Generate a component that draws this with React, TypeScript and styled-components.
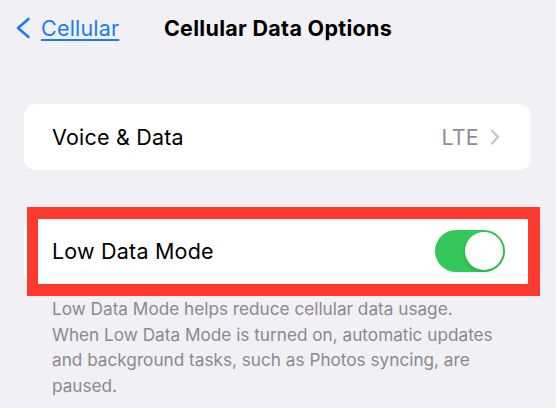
import React from "react";
import styled, { createGlobalStyle } from "styled-components";

const Global = createGlobalStyle`
  html, body { margin: 0; padding: 0; }
  body {
    background: #f1f0f5;
    font-family: Inter, "Noto Sans", "Liberation Sans", sans-serif;
    -webkit-font-smoothing: antialiased;
  }
`;

const Page = styled.div`
  width: 556px;
  height: 408px;
  overflow: hidden;
  background: #f1f0f5;
  display: flex;
  flex-direction: column;
  padding: 0 25px 0 24px;
  box-sizing: border-box;
`;

const NavBar = styled.div`
  height: 56px;
  margin: 0 -25px 0 -24px;
  display: grid;
  grid-template-columns: 1fr auto 1fr;
  align-items: center;
`;

const BackLink = styled.a`
  display: flex;
  align-items: center;
  gap: 9px;
  padding-left: 14px;
  color: #1b7cf4;
  font-size: 21.5px;
  letter-spacing: 0.2px;
  cursor: pointer;
`;

const BackText = styled.span`
  text-decoration: underline;
  text-underline-offset: 3px;
  text-decoration-thickness: 1.5px;
`;

const Title = styled.h1`
  margin: 0;
  font-size: 21.5px;
  font-weight: 700;
  letter-spacing: 0.3px;
  color: #000;
`;

const Card = styled.div`
  height: 66px;
  background: #fff;
  border-radius: 12px;
  display: flex;
  align-items: center;
  justify-content: space-between;
  padding: 0 26px 0 28px;
  box-sizing: border-box;
`;

const Section = styled.div<{ $top: number }>`
  margin-top: ${(p) => p.$top}px;
  position: relative;
`;

const Label = styled.span`
  font-size: 21.5px;
  letter-spacing: 0.2px;
  color: #000;
`;

const Detail = styled.span`
  display: flex;
  align-items: center;
  gap: 11px;
  font-size: 21.5px;
  letter-spacing: 0.2px;
  color: #8e8e93;
  padding-right: 5px;
`;

const RedFrame = styled.div`
  position: absolute;
  left: 3px;
  right: -9px;
  top: -11px;
  bottom: -12px;
  border: 12px solid #fe3a2f;
  border-left-width: 11px;
  pointer-events: none;
`;

const Toggle = styled.div<{ $on: boolean }>`
  width: 70px;
  height: 42px;
  border-radius: 21px;
  background: ${(p) => (p.$on ? "#34c759" : "#e9e9eb")};
  position: relative;
  flex-shrink: 0;
`;

const Knob = styled.div<{ $on: boolean }>`
  position: absolute;
  top: 2px;
  ${(p) => (p.$on ? "right: 2px;" : "left: 2px;")}
  width: 38px;
  height: 38px;
  border-radius: 50%;
  background: #fff;
  box-shadow: 0 2px 4px rgba(0, 0, 0, 0.15);
`;

const Footer = styled.p`
  margin: 12px 0 0;
  padding-left: 28px;
  font-size: 17.2px;
  line-height: 25.5px;
  color: #8a8a8e;
`;

export default function App() {
  return (
    <>
      <Global />
      <Page>
        <NavBar>
          <BackLink>
            <svg width="18" height="22" viewBox="0 0 18 22">
              <path d="M14.5 2 L4 11 L14.5 20" fill="none" stroke="#1b7cf4" strokeWidth="2.6" strokeLinecap="round" strokeLinejoin="round" />
            </svg>
            <BackText>Cellular</BackText>
          </BackLink>
          <Title>Cellular Data Options</Title>
          <div />
        </NavBar>
        <Section $top={48}>
          <Card>
            <Label>Voice &amp; Data</Label>
            <Detail>
              LTE
              <svg width="10" height="16" viewBox="0 0 10 16">
                <path d="M2 1.5 L8 8 L2 14.5" fill="none" stroke="#c4c4c8" strokeWidth="2.2" strokeLinecap="round" strokeLinejoin="round" />
              </svg>
            </Detail>
          </Card>
        </Section>
        <Section $top={48}>
          <Card>
            <Label>Low Data Mode</Label>
            <Toggle $on>
              <Knob $on />
            </Toggle>
          </Card>
          <RedFrame />
        </Section>
        <Footer>
          Low Data Mode helps reduce cellular data usage.
          <br />
          When Low Data Mode is turned on, automatic updates
          <br />
          and background tasks, such as Photos syncing, are
          <br />
          paused.
        </Footer>
      </Page>
    </>
  );
}
